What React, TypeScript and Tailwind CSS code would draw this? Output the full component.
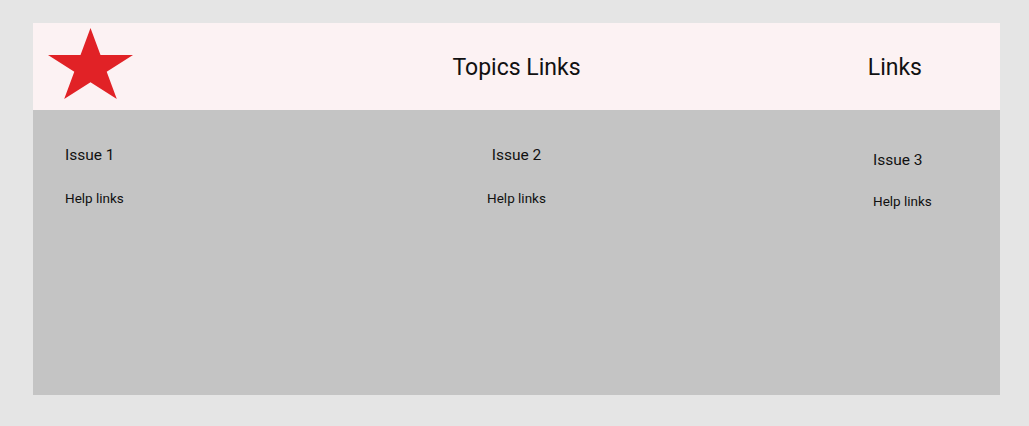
import React from "react";

export default function App() {
  return (
    <div
      className="min-h-[426px] w-full bg-[#e5e5e5] pt-[23px]"
      style={{ fontFamily: "Roboto, 'Noto Sans', sans-serif" }}
    >
      <div className="ml-[33px] w-[967px]">
        <header className="grid h-[87px] grid-cols-[1fr_auto_1fr] items-center bg-[#fcf2f3] text-[#111]">
          <div className="self-start pl-[15px] pt-[5px]">
            <svg width="85" height="71" viewBox="0 0 85 71" className="block">
              <polygon
                fill="#e12226"
                points="42.5,0 52.5,27.1 85,27.1 58.7,43.8 68.8,71 42.5,54.2 16.2,71 26.3,43.8 0,27.1 32.5,27.1"
              />
            </svg>
          </div>
          <div className="pt-[2px] text-[23px] leading-[28px]">Topics Links</div>
          <div className="flex justify-end pr-[78px] pt-[2px] text-[23px] leading-[28px]">Links</div>
        </header>
        <main className="grid h-[285px] grid-cols-[1fr_auto_1fr] bg-[#c4c4c4] text-[#111]">
          <div className="pl-[32px] pt-[35px]">
            <div className="text-[15.5px] leading-[20px]">Issue 1</div>
            <div className="mt-[25px] text-[13.5px] leading-[16px]">Help links</div>
          </div>
          <div className="pt-[35px] text-center">
            <div className="text-[15.5px] leading-[20px]">Issue 2</div>
            <div className="mt-[25px] text-[13.5px] leading-[16px]">Help links</div>
          </div>
          <div className="flex justify-end pt-[40px]">
            <div className="w-[127px]">
              <div className="text-[15.5px] leading-[20px]">Issue 3</div>
              <div className="mt-[23px] text-[13.5px] leading-[16px]">Help links</div>
            </div>
          </div>
        </main>
      </div>
    </div>
  );
}
